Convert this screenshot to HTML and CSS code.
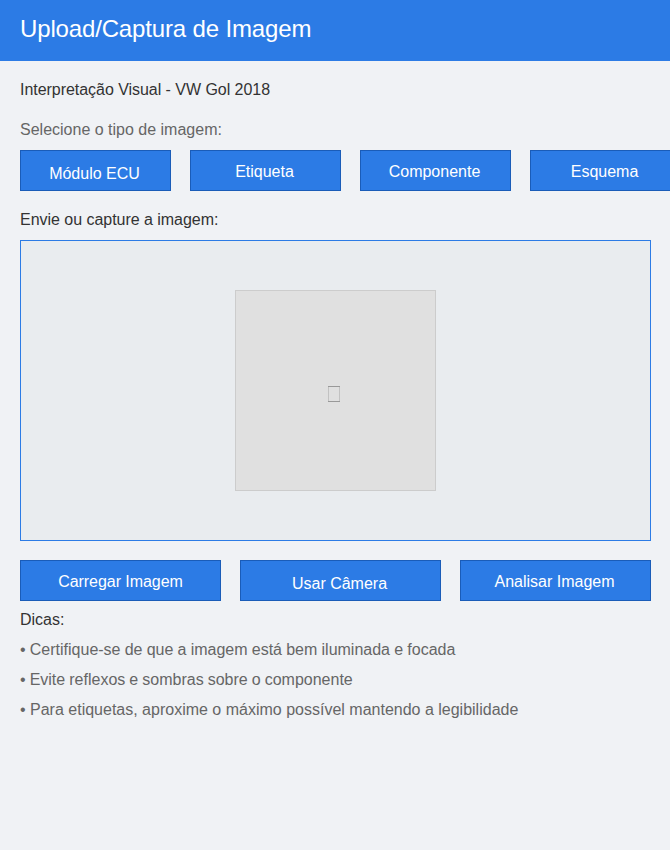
FILE: index.html
```html
<!DOCTYPE html>
<html lang="pt-BR">
<head>
<meta charset="utf-8">
<title>Upload/Captura de Imagem</title>
<link rel="stylesheet" href="styles.css">
</head>
<body>
<header class="header"><h1>Upload/Captura de Imagem</h1></header>
<main class="content">
  <h2 class="line vehicle">Interpretação Visual - VW Gol 2018</h2>
  <p class="line muted type-label">Selecione o tipo de imagem:</p>
  <div class="types">
    <button class="btn low">Módulo ECU</button>
    <button class="btn">Etiqueta</button>
    <button class="btn">Componente</button>
    <button class="btn">Esquema</button>
  </div>
  <h2 class="line upload-label">Envie ou capture a imagem:</h2>
  <section class="dropzone">
    <div class="preview">
      <svg class="glyph" width="12" height="16" viewBox="0 0 12 16"><path d="M.5 1v14M11.5 1v14" stroke="#c2c2c2"/><path d="M0 .5h12M0 15.5h12" stroke="#999"/></svg>
    </div>
  </section>
  <div class="actions">
    <button class="btn load">Carregar Imagem</button>
    <button class="btn low">Usar Câmera</button>
    <button class="btn">Analisar Imagem</button>
  </div>
  <h2 class="line tips-label">Dicas:</h2>
  <ul class="tips">
    <li class="tight">• Certifique-se de que a imagem está bem iluminada e focada</li>
    <li class="tighter">• Evite reflexos e sombras sobre o componente</li>
    <li>• Para etiquetas, aproxime o máximo possível mantendo a legibilidade</li>
  </ul>
</main>
</body>
</html>
```
FILE: styles.css
```css
* { box-sizing: border-box; margin: 0; padding: 0; }
body {
  height: 850px;
  overflow: hidden;
  background: #f0f2f5;
  color: #333;
  font: 16px/20px "Liberation Sans", Arial, sans-serif;
}
.header { height: 61px; padding: 14px 20px; background: #2c7be5; color: #fff; }
.header h1 { font-size: 24px; line-height: 30px; font-weight: 400; letter-spacing: -0.15px; }
.content { padding: 19px 19px 0 20px; }
.line { font-size: 16px; font-weight: 400; line-height: 20px; }
.muted { color: #666; }
.vehicle { letter-spacing: -0.04px; }
.type-label { margin-top: 20px; }
.types { display: grid; grid-template-columns: repeat(4, 151px); gap: 19px; margin-top: 10px; }
.btn {
  height: 41px;
  padding: 2px 2px 0 0;
  border: 1px solid #1a5cb8;
  background: #2c7be5;
  color: #fff;
  font: inherit;
  white-space: nowrap;
}
.btn.low { padding-top: 6px; }
.btn.load { padding-right: 0; letter-spacing: -0.05px; }
.upload-label { margin-top: 19px; letter-spacing: -0.03px; }
.dropzone {
  display: flex;
  align-items: center;
  justify-content: center;
  height: 301px;
  margin-top: 10px;
  border: 1px solid #2c7be5;
  background: #e9ecef;
}
.preview {
  display: flex;
  width: 201px;
  height: 201px;
  padding: 95px 0 0 92px;
  border: 1px solid #ccc;
  background: #e0e0e0;
}
.glyph { display: block; }
.actions { display: grid; grid-template-columns: 201px 201px 191px; gap: 19px; margin-top: 19px; }
.tips-label { margin-top: 9px; }
.tips { list-style: none; color: #666; }
.tips li { margin-top: 10px; white-space: nowrap; }
.tips .tight { word-spacing: -0.25px; }
.tips .tighter { word-spacing: -0.4px; }
```
